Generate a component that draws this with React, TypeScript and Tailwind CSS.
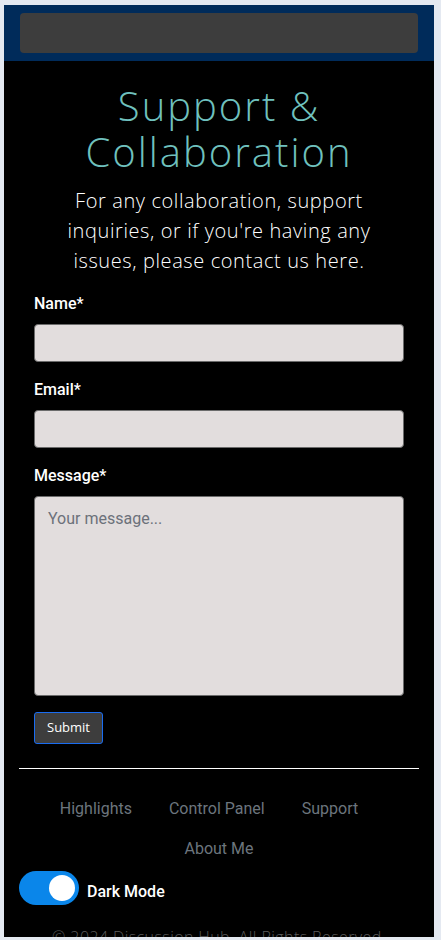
import React, { useState } from "react";

const poppins = { fontFamily: '"Open Sans", "Noto Sans", sans-serif' };
const sys = { fontFamily: 'Roboto, Inter, sans-serif' };

export default function App() {
  const [dark, setDark] = useState(true);

  return (
    <div className="h-[940px] overflow-hidden bg-[#e4e9f1] pl-[4px] pr-[7px] pt-[5px]">
      <div className="h-[932px] overflow-hidden bg-black">
        {/* Navbar */}
        <header className="bg-[#002b5a] px-[16px] py-[8px]">
          <div className="h-[40px] rounded-[4px] bg-[#3d3d3d]" />
        </header>

        <main className="px-[30px] pt-[22px]">
          <h1
            className="text-center text-[40px] font-light leading-[46px] tracking-[2px] text-[#6fc1be]"
            style={poppins}
          >
            Support &amp; Collaboration
          </h1>
          <p
            className="mx-auto mt-[11px] max-w-[320px] text-center text-[20px] font-light leading-[30px] tracking-[0.6px] text-white"
            style={poppins}
          >
            For any collaboration, support inquiries, or if you're having any issues, please contact us here.
          </p>

          <form className="mt-[16px] flex flex-col" style={sys}>
            <label className="text-[16px] font-medium leading-[24px] text-white">Name*</label>
            <input className="mt-[8px] h-[38px] rounded-[4px] border border-[#6b6b6b] bg-[#e2dddd] px-3" />
            <label className="mt-[16px] text-[16px] font-medium leading-[24px] text-white">Email*</label>
            <input className="mt-[8px] h-[38px] rounded-[4px] border border-[#6b6b6b] bg-[#e2dddd] px-3" />
            <label className="mt-[16px] text-[16px] font-medium leading-[24px] text-white">Message*</label>
            <textarea
              placeholder="Your message..."
              className="mt-[8px] h-[200px] resize-none rounded-[4px] border border-[#6b6b6b] bg-[#e2dddd] px-[13px] py-[10px] text-[16px] placeholder:text-[#6c717a]"
            />
            <div className="mt-[16px]">
              <button
                type="button"
                className="h-[32px] rounded-[3px] border border-[#1a6cf0] bg-[#3d3d3d] px-[12px] text-[13px] text-white"
                style={poppins}
              >
                Submit
              </button>
            </div>
          </form>
        </main>

        <footer className="mx-[15px] mt-[24px] border-t border-white pt-[28px]" style={sys}>
          <nav className="flex flex-wrap justify-center gap-x-[37px] gap-y-[16px] text-[16px] leading-[24px] text-[#6c757d]">
            <a>Highlights</a>
            <a>Control Panel</a>
            <a className="mr-[20px]">Support</a>
            <a>About Me</a>
          </nav>
          <div className="mt-[10px] flex items-center gap-[8px]">
            <button
              type="button"
              onClick={() => setDark(!dark)}
              className={`flex h-[34px] w-[60px] items-center rounded-full px-[4px] ${dark ? "justify-end bg-[#0a86ea]" : "justify-start bg-gray-500"}`}
            >
              <span className="h-[26px] w-[26px] rounded-full bg-white" />
            </button>
            <span className="mt-[8px] text-[16px] font-medium text-white">Dark Mode</span>
          </div>
          <p className="mt-[20px] text-center text-[16px] font-light tracking-[0.4px] text-[#5a5a5a]" style={poppins}>
            © 2024 Discussion Hub. All Rights Reserved.
          </p>
        </footer>
      </div>
    </div>
  );
}
